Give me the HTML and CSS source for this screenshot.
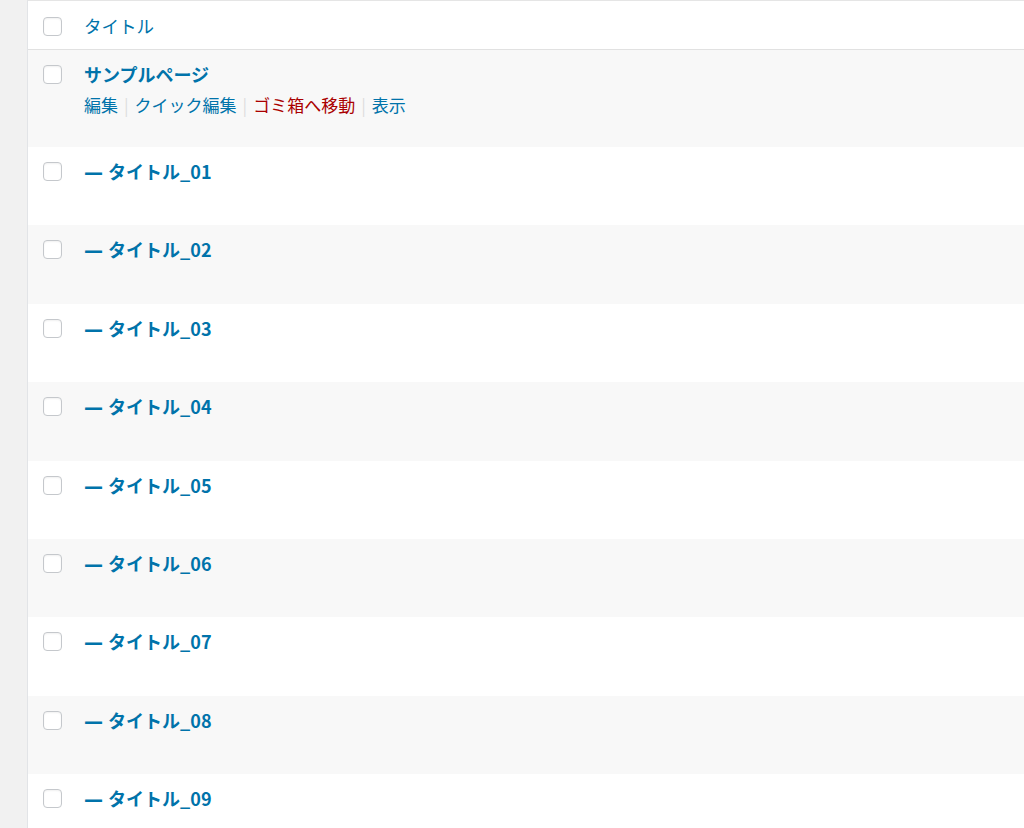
FILE: index.html
```html
<!DOCTYPE html>
<html lang="ja">
<head>
    <meta charset="UTF-8">
    <meta name="viewport" content="width=device-width, initial-scale=1.0">
    <title>固定ページ一覧</title>
    <link rel="stylesheet" href="styles.css">
</head>
<body>
    <div class="list-wrap">
        <table class="list-table">
            <thead>
                <tr class="head-row">
                    <td class="check-col"><input type="checkbox" class="cb"></td>
                    <th class="title-col"><a href="#" class="head-link">タイトル</a></th>
                </tr>
            </thead>
            <tbody>
                <tr class="row alt first">
                    <td class="check-col"><input type="checkbox" class="cb"></td>
                    <td class="title-col">
                        <a href="#" class="row-title">サンプルページ</a>
                        <div class="row-actions">
                            <a href="#">編集</a><span class="sep">|</span><a href="#">クイック編集</a><span class="sep">|</span><a href="#" class="trash">ゴミ箱へ移動</a><span class="sep">|</span><a href="#">表示</a>
                        </div>
                    </td>
                </tr>
                <tr class="row">
                    <td class="check-col"><input type="checkbox" class="cb"></td>
                    <td class="title-col"><a href="#" class="row-title"><span class="dash">—</span> タイトル_01</a></td>
                </tr>
                <tr class="row alt">
                    <td class="check-col"><input type="checkbox" class="cb"></td>
                    <td class="title-col"><a href="#" class="row-title"><span class="dash">—</span> タイトル_02</a></td>
                </tr>
                <tr class="row">
                    <td class="check-col"><input type="checkbox" class="cb"></td>
                    <td class="title-col"><a href="#" class="row-title"><span class="dash">—</span> タイトル_03</a></td>
                </tr>
                <tr class="row alt">
                    <td class="check-col"><input type="checkbox" class="cb"></td>
                    <td class="title-col"><a href="#" class="row-title"><span class="dash">—</span> タイトル_04</a></td>
                </tr>
                <tr class="row">
                    <td class="check-col"><input type="checkbox" class="cb"></td>
                    <td class="title-col"><a href="#" class="row-title"><span class="dash">—</span> タイトル_05</a></td>
                </tr>
                <tr class="row alt">
                    <td class="check-col"><input type="checkbox" class="cb"></td>
                    <td class="title-col"><a href="#" class="row-title"><span class="dash">—</span> タイトル_06</a></td>
                </tr>
                <tr class="row">
                    <td class="check-col"><input type="checkbox" class="cb"></td>
                    <td class="title-col"><a href="#" class="row-title"><span class="dash">—</span> タイトル_07</a></td>
                </tr>
                <tr class="row alt">
                    <td class="check-col"><input type="checkbox" class="cb"></td>
                    <td class="title-col"><a href="#" class="row-title"><span class="dash">—</span> タイトル_08</a></td>
                </tr>
                <tr class="row">
                    <td class="check-col"><input type="checkbox" class="cb"></td>
                    <td class="title-col"><a href="#" class="row-title"><span class="dash">—</span> タイトル_09</a></td>
                </tr>
            </tbody>
        </table>
    </div>
</body>
</html>
```

FILE: styles.css
```css
* {
    margin: 0;
    padding: 0;
    box-sizing: border-box;
}

body {
    font-family: "Noto Sans CJK JP", "Noto Sans", sans-serif;
    background-color: #f1f1f1;
    overflow: hidden;
}

a {
    color: #0073aa;
    text-decoration: none;
}

.list-wrap {
    margin-left: 27px;
    margin-right: -2px;
    border-left: 1px solid #e2e4e7;
    border-top: 1px solid #e5e5e5;
    background-color: #fff;
}

.list-table {
    width: 100%;
    border-collapse: collapse;
}

.list-table td,
.list-table th {
    vertical-align: top;
    text-align: left;
}

/* header */
.head-row {
    height: 48px;
    border-bottom: 1px solid #e1e1e1;
}

.head-row td,
.head-row th {
    padding-top: 11px;
}

.head-link {
    font-size: 17.5px;
    font-weight: normal;
    line-height: 28px;
}

/* checkbox column */
.check-col {
    width: 55px;
    padding-left: 15px;
}

.cb {
    appearance: none;
    -webkit-appearance: none;
    display: block;
    width: 19px;
    height: 19px;
    margin-top: 5px;
    border: 1px solid #c5c8cc;
    border-radius: 4px;
    background-color: #fff;
    box-shadow: inset 0 1px 2px rgba(0, 0, 0, 0.06);
}

/* rows */
.row {
    height: 78.4px;
}

.row.alt {
    background-color: #f8f8f8;
}

.row.first {
    height: 98px;
}

.row td {
    padding-top: 10px;
}

.title-col {
    padding-left: 1px;
}

.row-title {
    font-size: 18px;
    font-weight: bold;
    line-height: 28px;
}

.row-title .dash {
    font-family: "DejaVu Sans", sans-serif;
    font-size: 19px;
    margin-right: 1px;
}

.row-actions {
    margin-top: 5px;
    font-size: 17px;
    line-height: 24px;
}

.row-actions .sep {
    color: #ddd;
    margin: 0 6px;
}

.row-actions .trash {
    color: #a00;
}
```
